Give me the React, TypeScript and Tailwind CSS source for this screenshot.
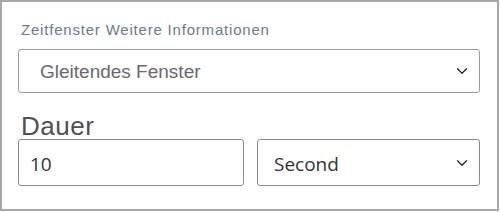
import { ChevronDown } from 'lucide-react'

export default function App() {
  return (
    <div className="w-[499px] h-[211px] border-2 border-[#a8a8a8] bg-white pl-4 pr-[17px] pt-[19px] font-['Liberation_Sans',Arial,sans-serif]">
      {/* Zeitfenster */}
      <div className="pl-[3px] text-[15px] leading-[18px] tracking-[0.8px] text-[#6b7a98]">
        Zeitfenster Weitere Informationen
      </div>
      <div className="mt-[10px] h-[44px] flex items-center justify-between rounded-[3px] border border-[#9a9a9a] pl-[21px] pr-[8px]">
        <span className="pt-[3px] text-[19px] text-[#6b6770]">Gleitendes Fenster</span>
        <ChevronDown className="w-[18px] h-[18px] text-[#222]" strokeWidth={1.6} />
      </div>

      {/* Dauer */}
      <div className="mt-[21px] pl-[3px] text-[26px] leading-[25px] tracking-[0.5px] text-[#505050]">Dauer</div>
      <div className="flex gap-[13px]">
        <div className="w-[226px] h-[47px] flex items-center rounded-[3px] border border-[#8a8a8a] pl-[11px] pt-[3px] font-['Open_Sans',sans-serif] text-[19px] text-[#333]">
          10
        </div>
        <div className="flex-1 h-[47px] flex items-center justify-between rounded-[3px] border border-[#8a8a8a] pl-[16px] pr-[8px] font-['Open_Sans',sans-serif] text-[19px] text-[#333]">
          <span className="pt-[3px]">Second</span>
          <ChevronDown className="w-[18px] h-[18px] text-[#222]" strokeWidth={1.6} />
        </div>
      </div>
    </div>
  )
}
